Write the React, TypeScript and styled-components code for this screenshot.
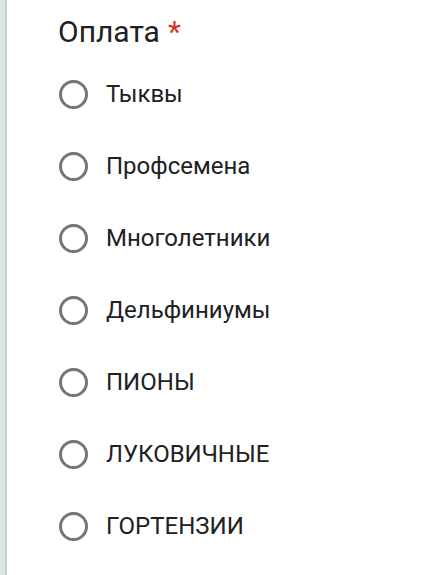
import React from "react";
import styled, { createGlobalStyle } from "styled-components";

const Global = createGlobalStyle`
  html, body { margin: 0; padding: 0; background: #ffffff; }
  body { font-family: Roboto, "Liberation Sans", Arial, sans-serif; }
`;

const Page = styled.div`
  display: flex;
  width: 430px;
  height: 575px;
  overflow: hidden;
  background: #ffffff;
`;

const Edge = styled.div`
  flex: 0 0 7px;
  background: linear-gradient(to right, #e0e7e3 0px, #dce3df 5px, #c6cfca 5px, #c9d1cd 7px);
`;

const Content = styled.div`
  flex: 1;
  padding: 14px 0 0 51px;
  display: flex;
  flex-direction: column;
`;

const Title = styled.div`
  font-size: 30px;
  line-height: 36px;
  height: 36px;
  color: #202124;
  margin-bottom: 8px;
  white-space: nowrap;
`;

const Star = styled.span`
  color: #d93025;
  margin-left: 8px;
`;

const Options = styled.div`
  display: flex;
  flex-direction: column;
`;

const Row = styled.label`
  display: flex;
  align-items: center;
  height: 72px;
  gap: 18px;
  cursor: pointer;
`;

const Radio = styled.span`
  box-sizing: border-box;
  width: 29px;
  height: 29px;
  border: 3px solid #757575;
  border-radius: 50%;
  margin-left: 1px;
  flex: 0 0 auto;
`;

const Label = styled.span`
  font-size: 24px;
  color: #202124;
  white-space: nowrap;
`;

const items = [
  "Тыквы",
  "Профсемена",
  "Многолетники",
  "Дельфиниумы",
  "ПИОНЫ",
  "ЛУКОВИЧНЫЕ",
  "ГОРТЕНЗИИ",
];

export default function App() {
  return (
    <>
      <Global />
      <Page>
        <Edge />
        <Content>
          <Title>
            Оплата<Star>*</Star>
          </Title>
          <Options>
            {items.map((t) => (
              <Row key={t}>
                <Radio />
                <Label>{t}</Label>
              </Row>
            ))}
          </Options>
        </Content>
      </Page>
    </>
  );
}
